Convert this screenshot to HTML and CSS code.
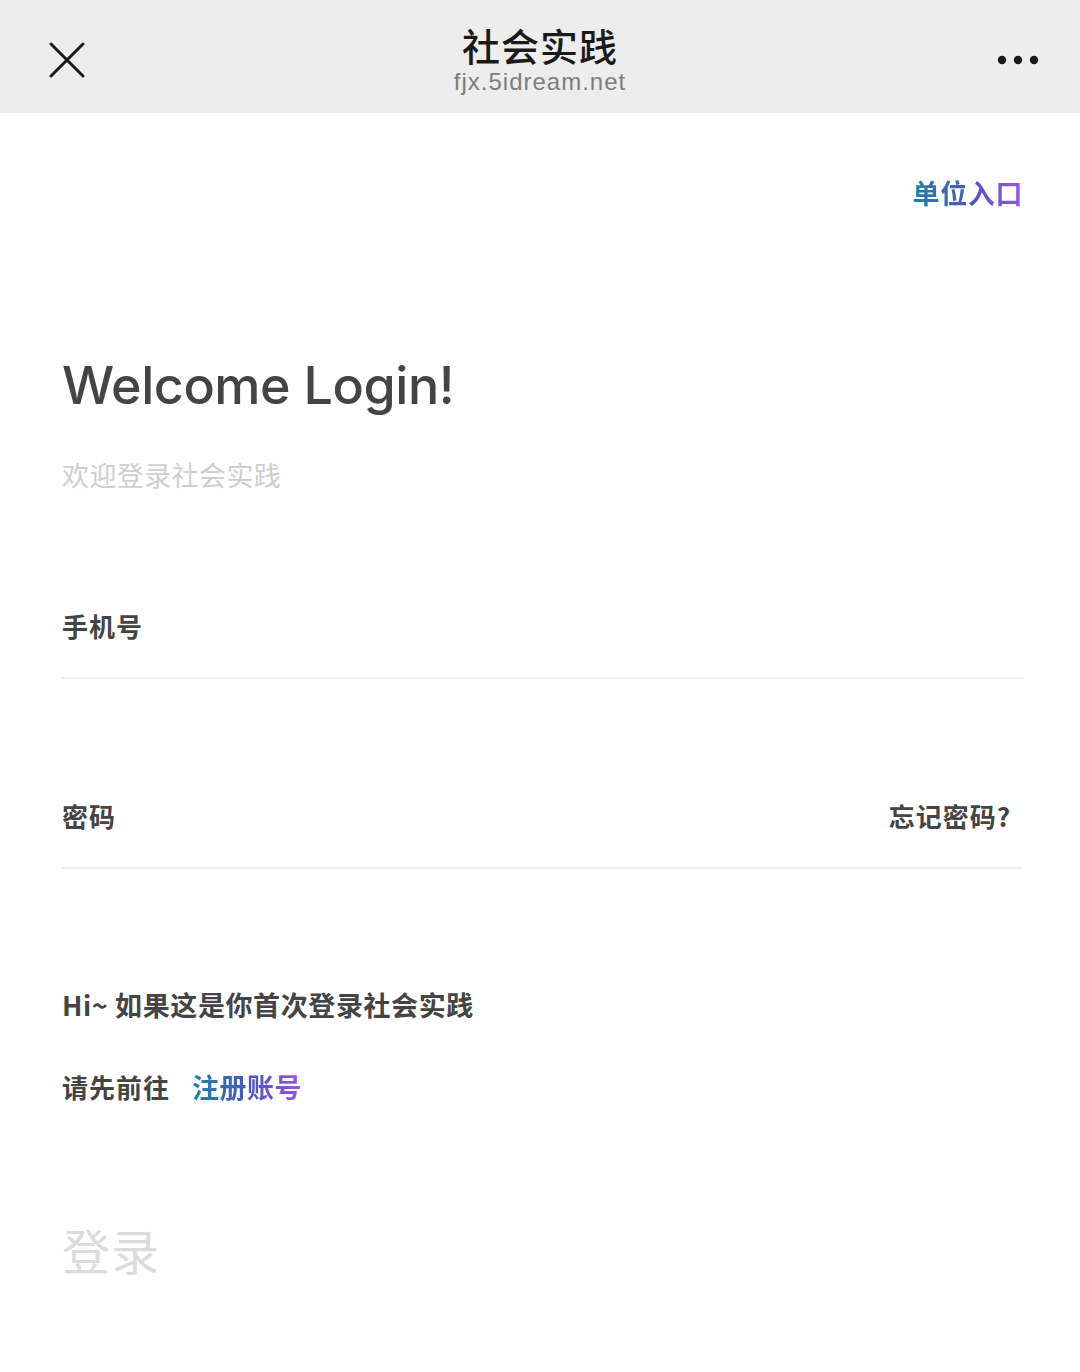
FILE: index.html
```html
<!DOCTYPE html>
<html lang="zh-CN">
<head>
<meta charset="utf-8">
<title>社会实践</title>
<link rel="stylesheet" href="styles.css">
</head>
<body>
<header class="navbar">
  <div class="nav-left">
    <svg class="icon-close" width="36" height="36" viewBox="0 0 36 36"><path d="M2 2 L34 34 M34 2 L2 34" stroke="#1a1a1a" stroke-width="3" stroke-linecap="round" fill="none"/></svg>
  </div>
  <div class="nav-title">
    <div class="title">社会实践</div>
    <div class="domain">fjx.5idream.net</div>
  </div>
  <div class="nav-right">
    <svg class="icon-more" width="42" height="10" viewBox="0 0 42 10"><circle cx="5" cy="5" r="4.2" fill="#1a1a1a"/><circle cx="21" cy="5" r="4.2" fill="#1a1a1a"/><circle cx="37" cy="5" r="4.2" fill="#1a1a1a"/></svg>
  </div>
</header>
<main class="content">
  <div class="entry-row"><span class="grad-text">单位入口</span></div>
  <h1 class="welcome">Welcome Login!</h1>
  <p class="sub">欢迎登录社会实践</p>
  <div class="field field-first"><span class="label">手机号</span></div>
  <div class="field field-second"><span class="label">密码</span><span class="forgot">忘记密码?</span></div>
  <p class="hint">Hi~ 如果这是你首次登录社会实践</p>
  <p class="register">请先前往<span class="grad-text reg-link">注册账号</span></p>
  <div class="login-btn">登录</div>
</main>
</body>
</html>
```
FILE: styles.css
```css
* { box-sizing: border-box; }
html, body { margin: 0; padding: 0; background: #fff; }
body {
  width: 1080px;
  height: 1372px;
  overflow: hidden;
  font-family: "Noto Sans CJK SC", "Noto Sans", sans-serif;
  color: #444;
}
.navbar {
  height: 113px;
  background: #ededed;
  display: flex;
  align-items: center;
  justify-content: space-between;
}
.nav-left { width: 200px; padding-left: 49px; display: flex; align-items: center; padding-top: 7px; }
.nav-right { width: 200px; display: flex; justify-content: flex-end; padding-right: 41px; padding-top: 6px; }
.nav-title {
  align-self: flex-start;
  padding-top: 23px;
  display: flex;
  flex-direction: column;
  align-items: center;
}
.title { font-size: 38px; line-height: 44px; font-weight: 500; color: #1a1a1a; letter-spacing: 1px; }
.domain { margin-top: 1px; font-family: "Liberation Sans", Arial, sans-serif; font-size: 24px; line-height: 28px; color: #7d7d7d; letter-spacing: 1px; }
.content { padding: 0 57px 0 62px; }
.entry-row { margin-top: 60px; height: 40px; line-height: 40px; display: flex; justify-content: flex-end; }
.grad-text {
  background: linear-gradient(90deg, #1f80a8 0%, #4f55c0 55%, #9b55ea 100%);
  -webkit-background-clip: text;
  background-clip: text;
  color: transparent;
  font-weight: 700;
}
.entry-row .grad-text { font-size: 27px; letter-spacing: 0.6px; }
.welcome {
  margin: 138px 0 0;
  height: 70px;
  line-height: 70px;
  font-family: "Inter", "Liberation Sans", sans-serif;
  font-weight: 500;
  font-size: 52px;
  letter-spacing: -0.45px;
  color: #444;
}
.sub { margin: 34px 0 0; line-height: 40px; font-size: 27px; color: #cfcfcf; letter-spacing: 0.4px; }
.field {
  display: flex;
  justify-content: space-between;
  line-height: 40px;
  padding-bottom: 31px;
  border-bottom: 2px solid #efefef;
}
.field-first { margin-top: 111px; }
.field-second { margin-top: 117px; padding-right: 12px; }
.label, .forgot { font-size: 26px; font-weight: 700; color: #444; letter-spacing: 1px; }
.hint { margin: 116px 0 0; line-height: 40px; font-size: 27px; font-weight: 700; color: #444; letter-spacing: 0.6px; }
.register { margin: 42px 0 0; line-height: 40px; font-size: 26px; font-weight: 700; color: #444; letter-spacing: 1px; }
.reg-link { margin-left: 22px; font-size: 27px; letter-spacing: 0.5px; }
.login-btn { margin-top: 112px; line-height: 60px; font-size: 48px; color: #dcdcdc; letter-spacing: 1px; }
```
